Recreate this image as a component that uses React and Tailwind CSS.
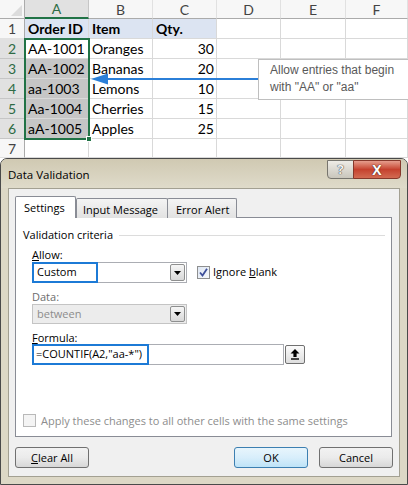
import React from 'react'

const cols = ['A', 'B', 'C', 'D', 'E', 'F']

const rows = [
  ['Order ID', 'Item', 'Qty.'],
  ['AA-1001', 'Oranges', '30'],
  ['AA-1002', 'Bananas', '20'],
  ['aa-1003', 'Lemons', '10'],
  ['Aa-1004', 'Cherries', '15'],
  ['aA-1005', 'Apples', '25'],
  ['', '', ''],
]

const DropArrow = () => (
  <svg width="7" height="4" viewBox="0 0 7 4">
    <path d="M0 0h7L3.5 4z" fill="#000" />
  </svg>
)

const Sheet = () => {
  return (
    <div className="relative font-[Lato,sans-serif] text-[14px] text-black">
      <div className="grid grid-cols-[25px_64px_64px_64px_64px_65px_1fr]">
        <div className="relative h-[19px] border-r border-b border-[#ababab] bg-[#f7f7f7]">
          <svg className="absolute left-[11px] top-[5px]" width="11" height="11" viewBox="0 0 11 11">
            <path d="M11 0V11H0z" fill="#dcdcdc" />
          </svg>
        </div>
        {cols.map((c) => (
          <div
            key={c}
            className={
              c === 'A'
                ? 'flex h-[19px] items-center justify-center border-r border-b-2 border-r-[#c6c6c6] border-b-[#217346] bg-[#e1e1e1] text-[#2e6b45]'
                : 'flex h-[19px] items-center justify-center border-r border-b border-r-[#e1e1e1] border-b-[#ababab] bg-[#f7f7f7] text-[#444]'
            }
          >
            {c}
          </div>
        ))}

        {rows.map((r, i) => {
          const n = i + 1
          const sel = n >= 2 && n <= 6
          const h = n === 7 ? 'h-[19px]' : 'h-5'
          return (
            <React.Fragment key={n}>
              <div
                className={`${h} flex items-center justify-center border-r border-b border-r-[#ababab] ${
                  sel ? 'border-b-[#c6c6c6] bg-[#e1e1e1] text-[#2e6b45]' : 'border-b-[#e1e1e1] bg-[#f7f7f7] text-[#444]'
                }`}
              >
                {n}
              </div>
              {cols.map((c, j) => {
                const v = r[j] || ''
                let bg = 'bg-white'
                if (n === 1 && j < 3) bg = 'bg-[#dce4f2] font-bold'
                if (n >= 3 && n <= 6 && j === 0) bg = 'bg-[#c6c6c6]'
                return (
                  <div
                    key={c}
                    className={`${h} ${bg} flex items-center border-r border-b border-[#d9d9d9] ${
                      j === 2 && n > 1 ? 'justify-end pr-[2px]' : 'pl-[3px]'
                    }`}
                  >
                    {v}
                  </div>
                )
              })}
            </React.Fragment>
          )
        })}
      </div>

      {/* selected range A2:A6 */}
      <div className="absolute left-[24px] top-[38px] h-[102px] w-[66px] border-2 border-[#217346]" />
      <div className="absolute left-[86px] top-[136px] h-[6px] w-[6px] border border-white bg-[#217346]" />

      {/* arrow */}
      <svg className="absolute left-[89px] top-[72px]" width="170" height="14" viewBox="0 0 170 14">
        <path d="M14 7H170" stroke="#2b7fd8" strokeWidth="2" />
        <path d="M2 7L19 1.5V12.5z" fill="#2b7fd8" />
      </svg>

      {/* note */}
      <div className="absolute left-[258px] top-[59px] h-[41px] w-[160px] border border-[#bfbfbf] bg-white pl-[11px] pt-[2px] font-['Liberation_Sans',Arial,sans-serif] text-[12px] leading-[17px] text-[#595959]">
        <div>Allow entries that begin</div>
        <div>with "AA" or "aa"</div>
      </div>
    </div>
  )
}

const Combo = ({ children, disabled }) => (
  <div
    className={`flex h-full w-[155px] items-stretch border ${
      disabled ? 'border-[#c4c4c4] bg-[#ececec] text-[#8d8d8d]' : 'border-[#abadb3] bg-white'
    }`}
  >
    {children}
    <div className="flex-1" />
    <div className="my-px mr-px flex w-[15px] items-center justify-center rounded-[2px] border border-[#8e8f8f] bg-linear-to-b from-[#f6f6f6] to-[#d8d8d8]">
      <DropArrow />
    </div>
  </div>
)

const Btn = ({ children, primary }) => (
  <div
    className={`flex h-[21px] w-[74px] items-center justify-center rounded-[3px] border pt-px ${
      primary
        ? 'border-[#3c7fb1] bg-linear-to-b from-[#e8f5fc] via-[#d8eefb] to-[#bee3f7]'
        : 'border-[#707070] bg-linear-to-b from-[#f2f2f2] via-[#ebebeb] to-[#d7d7d7]'
    }`}
  >
    {children}
  </div>
)

const Dialog = () => {
  return (
    <div className="h-[327px] rounded-t-[7px] border border-[#4a4a4a] bg-[#ddd8c6] font-['Open_Sans',sans-serif] text-[11px] text-black">
      <div className="flex h-[29px] items-start rounded-t-[6px] bg-linear-to-b from-[#d0c9b2] to-[#dfdbca]">
        <div className="pl-[7px] pt-[8px] text-[11.5px] leading-[16px]">Data Validation</div>
        <div className="ml-auto mr-[6px] mt-px flex">
          <div className="flex h-[19px] w-[27px] items-center justify-center rounded-bl-[4px] border border-[#77756e] bg-linear-to-b from-[#eeece6] to-[#c9c6bc] text-[13px] font-bold leading-none text-[#f4f4f4] [text-shadow:0_0_1px_#333,0_0_1px_#333]">
            ?
          </div>
          <div className="-ml-px flex h-[19px] w-[48px] items-center justify-center rounded-br-[4px] border border-[#86382b] bg-linear-to-b from-[#e59d8d] via-[#c5412e] to-[#d26a52] text-[14px] font-bold leading-none text-white [text-shadow:0_0_1px_#4a1a12,0_0_1px_#4a1a12]">
            X
          </div>
        </div>
      </div>

      <div className="mx-[7px] h-[289px] border border-[#a3a092] bg-[#f0f0f0] px-[6px] pt-[7px]">
        {/* tabs */}
        <div className="flex h-[22px] items-end">
          <div className="relative z-10 flex h-[22px] w-[61px] items-center rounded-t-[2px] border-x border-t border-[#898c95] bg-white pl-[8px] pt-[2px]">
            Settings
          </div>
          <div className="flex h-[20px] w-[92px] items-center rounded-t-[2px] border-x border-t border-[#898c95] bg-linear-to-b from-[#f4f4f4] to-[#e2e2e2] pl-[6px] pt-[3px]">
            Input Message
          </div>
          <div className="-ml-px flex h-[20px] w-[70px] items-center rounded-t-[2px] border-x border-t border-[#898c95] bg-linear-to-b from-[#f4f4f4] to-[#e2e2e2] pl-[8px] pt-[3px]">
            Error Alert
          </div>
        </div>

        {/* panel */}
        <div className="-mt-px flex h-[220px] w-[377px] flex-col border border-[#898c95] bg-white">
          <div className="mt-[9px] flex h-[16px] items-center pl-[7px] pr-[6px]">
            <span className="pt-px">Validation criteria</span>
            <div className="ml-[6px] flex-1 border-t border-[#dcdcdc]" />
          </div>

          <div className="ml-[16px] mt-[5px] h-[14px] leading-[14px]">
            <span className="underline">A</span>llow:
          </div>
          <div className="ml-[16px] flex h-[21px] items-center">
            <Combo>
              <div className="-my-px -ml-px flex w-[66px] items-center border-2 border-[#1c7ad6] pl-[3px]">Custom</div>
            </Combo>
            <div className="ml-[10px] flex h-[13px] w-[13px] items-center justify-center border border-[#8e8f8f] bg-linear-to-br from-[#dfe7f3] to-[#f5f8fc]">
              <svg width="9" height="9" viewBox="0 0 9 9">
                <path d="M1 4.5L3.5 7.5L8 0.8" fill="none" stroke="#3d4f9a" strokeWidth="1.8" />
              </svg>
            </div>
            <span className="ml-[3px]">
              Ignore <span className="underline">b</span>lank
            </span>
          </div>

          <div className="ml-[16px] mt-[7px] h-[14px] leading-[14px] text-[#6d6d6d]">Data:</div>
          <div className="ml-[16px] flex h-[20px]">
            <Combo disabled>
              <div className="flex items-center pl-[4px]">between</div>
            </Combo>
          </div>

          <div className="ml-[16px] mt-[7px] h-[14px] leading-[14px]">
            <span className="underline">F</span>ormula:
          </div>
          <div className="ml-[16px] -mt-px flex h-[21px] items-center">
            <div className="flex h-full w-[252px] items-stretch border border-[#abadb3] bg-white">
              <div className="-my-px -ml-px flex w-[117px] items-center border-2 border-[#1c7ad6] pl-[2px]">
                =COUNTIF(A2,"aa-*")
              </div>
            </div>
            <div className="ml-[1px] flex h-[19px] w-[20px] items-center justify-center rounded-[2px] border border-[#707070] bg-linear-to-b from-[#fbfbfb] to-[#dedede]">
              <svg width="10" height="11" viewBox="0 0 10 11">
                <path d="M5 0L9.5 4.5H6.6V8H3.4V4.5H0.5z" fill="#000" />
                <path d="M1 10H9" stroke="#000" strokeWidth="1.4" />
              </svg>
            </div>
          </div>

          <div className="mt-[49px] flex h-[13px] items-center pl-[7px] text-[#8d8d8d]">
            <div className="h-[13px] w-[13px] border border-[#b9b9b9] bg-[#f4f4f4]" />
            <span className="ml-[5px] pt-[2px]">Apply these changes to all other cells with the same settings</span>
          </div>
        </div>

        {/* buttons */}
        <div className="mt-[10px] flex gap-[11px]">
          <Btn>
            <span>
              <span className="underline">C</span>lear All
            </span>
          </Btn>
          <div className="flex-1" />
          <Btn primary>OK</Btn>
          <Btn>Cancel</Btn>
        </div>
      </div>
    </div>
  )
}

export default function App() {
  return (
    <div className="h-[485px] w-[408px] overflow-hidden bg-white">
      <Sheet />
      <Dialog />
    </div>
  )
}
